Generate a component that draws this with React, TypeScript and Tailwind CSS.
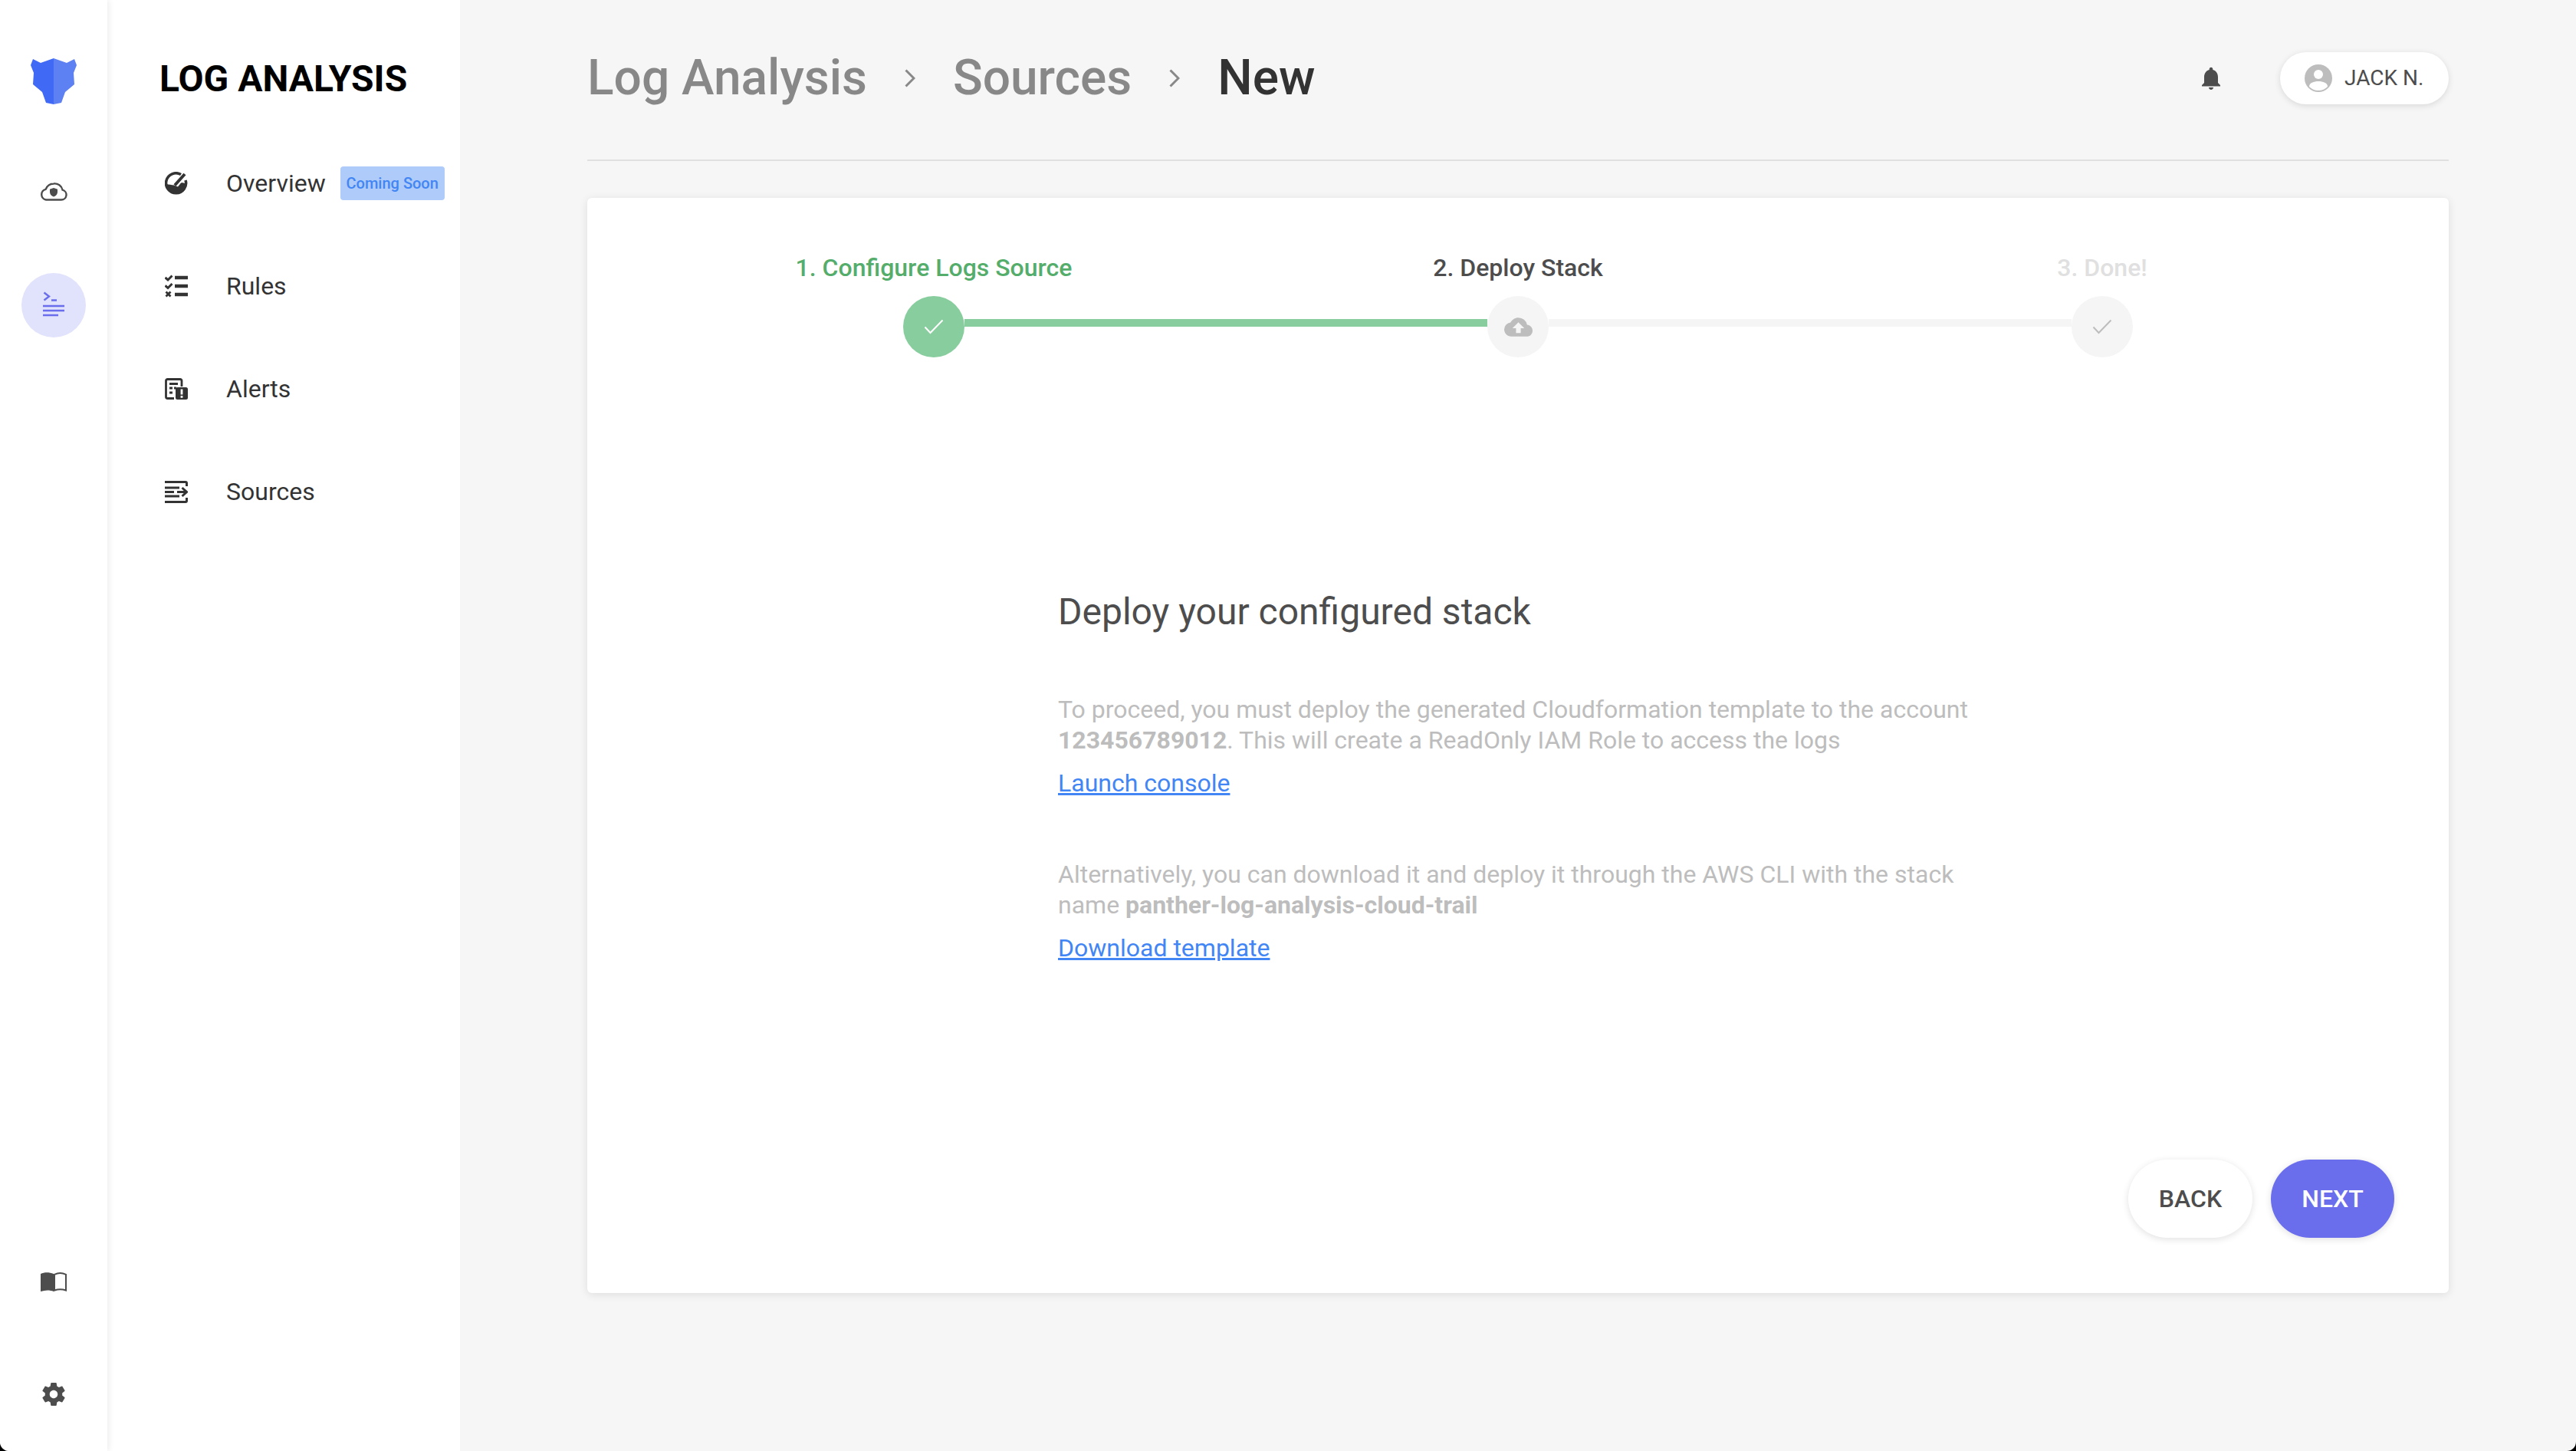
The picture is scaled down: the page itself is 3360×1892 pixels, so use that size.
const Logo = () => (
  <svg viewBox="0 0 60 60" className="h-[60px] w-[60px]">
    <path d="M30 0 L13 6 L3 1 L0 9 L4 19 L3 34 L15 44 L20 58 L30 60 Z" fill="#4069f6" />
    <path d="M30 0 L47 6 L57 1 L60 9 L56 19 L57 34 L45 44 L40 58 L30 60 Z" fill="#5d80f2" />
  </svg>
);

const CloudShield = () => (
  <svg viewBox="0 0 36 24" className="h-[24px] w-[36px]" fill="none">
    <path d="M8 22.500h20a6.500 6.500 0 0 0 1.600-12.800A10.500 10.500 0 0 0 18 1.500 11 11 0 0 0 7.600 8.800 7 7 0 0 0 8 22.500Z" stroke="#4d4d4d" strokeWidth="2.400" />
    <path d="M18 7l5 1.800v3.400c0 3-2 5.400-5 6.300-3-.900-5-3.300-5-6.300V8.800z" fill="#4d4d4d" />
  </svg>
);

const TerminalLines = () => (
  <svg viewBox="0 0 28 36" className="h-[36px] w-[28px]" fill="none" stroke="#6a6eed">
    <path d="M1.500 1.500 L8 6.500 L1.500 11.500" strokeWidth="2.400" />
    <path d="M11 11.500h7M0 19h28M0 25h28M0 31h20" strokeWidth="2.400" />
  </svg>
);

const BookIcon = () => (
  <svg viewBox="0 0 34 26" className="h-[26px] w-[34px]">
    <path d="M0 3c5-2.500 11-2.500 17 0v23c-5-2-11-2-17 0z" fill="#4d4d4d" />
    <path d="M18 3.800c5-2.500 10-2.500 15 0v20.700c-5-1.700-10-1.700-15 0z" fill="none" stroke="#4d4d4d" strokeWidth="2" />
  </svg>
);

const GearIcon = () => (
  <svg viewBox="0 0 24 24" className="h-[36px] w-[36px]" fill="#4d4d4d">
    <path d="M19.430 12.980c.040-.320.070-.640.070-.980s-.030-.660-.070-.980l2.110-1.650c.190-.150.240-.420.120-.640l-2-3.460c-.120-.220-.390-.300-.610-.220l-2.490 1c-.520-.400-1.080-.730-1.690-.980l-.380-2.650A.488.488 0 0 0 14 2h-4c-.250 0-.460.180-.490.420l-.380 2.650c-.610.250-1.170.590-1.690.980l-2.490-1c-.230-.090-.490 0-.610.220l-2 3.460c-.130.220-.070.490.120.640l2.110 1.650c-.040.320-.070.650-.070.980s.030.660.070.980l-2.110 1.650c-.190.150-.240.420-.120.640l2 3.460c.120.220.390.300.610.220l2.490-1c.520.400 1.080.730 1.690.980l.380 2.650c.030.240.240.420.490.420h4c.250 0 .460-.180.490-.420l.380-2.650c.610-.250 1.170-.590 1.690-.980l2.490 1c.230.090.490 0 .610-.220l2-3.460c.120-.220.070-.490-.120-.640l-2.110-1.650zM12 15.500c-1.930 0-3.500-1.570-3.500-3.500s1.570-3.500 3.500-3.500 3.500 1.570 3.500 3.500-1.570 3.500-3.500 3.500z" />
  </svg>
);

const OverviewIcon = () => (
  <svg viewBox="0 0 30 30" className="h-[30px] w-[30px]" fill="none">
    <path d="M21 3.500A13 13 0 1 0 27 11" stroke="#333" strokeWidth="3.600" />
    <path d="M2 16a13 13 0 0 0 26 0c-3-1.500-5-2-7-1.500l-4 5-5-2c-3-.500-7-1-10-1.500z" fill="#333" />
    <path d="M13 17.500 L26 3" stroke="#333" strokeWidth="4" />
  </svg>
);

const RulesIcon = () => (
  <svg viewBox="0 0 30 30" className="h-[30px] w-[30px]" fill="none" stroke="#333">
    <path d="M0.500 4l3.500 3 5.500-5.500M0.500 14.500l3.500 3 5.500-5.500" strokeWidth="3" />
    <path d="M1.500 22.500l6 6M7.500 22.500l-6 6" strokeWidth="2.800" />
    <path d="M13 4h17M13 15h17M13 26h17" strokeWidth="4.400" />
  </svg>
);

const AlertsIcon = () => (
  <svg viewBox="0 0 30 28" className="h-[28px] w-[30px]" fill="none">
    <path d="M22 11V3.500a2 2 0 0 0-2-2H3.500a2 2 0 0 0-2 2v21a2 2 0 0 0 2 2H12" stroke="#333" strokeWidth="2.800" />
    <path d="M6 7.500h11M6 13h4M6 19h4M12 13h3" stroke="#333" strokeWidth="2.800" />
    <rect x="14" y="12" width="16" height="16" rx="2.500" fill="#333" />
    <path d="M22 14.500v7M22 23v2.800" stroke="#fff" strokeWidth="2.800" />
  </svg>
);

const SourcesIcon = () => (
  <svg viewBox="0 0 30 29" className="h-[29px] w-[30px]" fill="none" stroke="#333">
    <path d="M28.500 7V3a1.500 1.500 0 0 0-1.500-1.500H0M28.500 22v4a1.500 1.500 0 0 1-1.500 1.500H0" strokeWidth="3" />
    <path d="M0 9h19M0 14.500h12M0 20h19" strokeWidth="3" />
    <path d="M16 14.500h12M22.500 9l6 5.500-6 5.500" strokeWidth="3" />
  </svg>
);

const BellIcon = () => (
  <svg viewBox="0 0 24 24" className="h-[36px] w-[36px]" fill="#4d4d4d">
    <path d="M12 22c1.100 0 2-.900 2-2h-4c0 1.100.900 2 2 2zm6-6v-5c0-3.070-1.630-5.640-4.500-6.320V4c0-.830-.670-1.500-1.500-1.500s-1.500.670-1.500 1.500v.680C7.640 5.360 6 7.920 6 11v5l-2 2v1h16v-1l-2-2z" />
  </svg>
);

const AvatarIcon = () => (
  <svg viewBox="0 0 36 36" className="h-[36px] w-[36px]">
    <circle cx="18" cy="18" r="18" fill="#bdbdbd" />
    <circle cx="18" cy="13" r="6" fill="#fff" />
    <path d="M6 29c0-5 6-7 12-7s12 2 12 7c-3 3-7 5-12 5s-9-2-12-5z" fill="#fff" />
  </svg>
);

const Chevron = () => (
  <svg viewBox="0 0 14 24" className="mx-[49px] h-[24px] w-[14px]" fill="none">
    <path d="M1.500 1.500L12 12 1.500 22.500" stroke="#888" strokeWidth="3" />
  </svg>
);

const CheckMark = ({ color }: { color: string }) => (
  <svg viewBox="0 0 26 20" className="h-[20px] w-[26px]" fill="none">
    <path d="M1.500 10.500L8.500 18 24.500 1.500" stroke={color} strokeWidth="2" />
  </svg>
);

const CloudUpload = () => (
  <svg viewBox="0 0 24 24" className="h-[37px] w-[37px]" fill="#bdbdbd">
    <path d="M19.350 10.040A7.490 7.490 0 0 0 12 4C9.110 4 6.600 5.640 5.350 8.040A5.994 5.994 0 0 0 0 14c0 3.310 2.690 6 6 6h13c2.760 0 5-2.240 5-5 0-2.640-2.050-4.780-4.650-4.960zM14 13v4h-4v-4H7l5-5 5 5h-3z" />
  </svg>
);

const navItems = [
  { label: 'Overview', icon: <OverviewIcon />, badge: true },
  { label: 'Rules', icon: <RulesIcon /> },
  { label: 'Alerts', icon: <AlertsIcon /> },
  { label: 'Sources', icon: <SourcesIcon /> },
];

export default function App() {
  return (
    <div className="h-[1892px] w-[3360px] overflow-hidden bg-black">
      <div className="flex h-full w-full overflow-hidden rounded-b-[12px] bg-[#f6f6f6] font-['Roboto',sans-serif]">
        {/* Icon rail */}
        <aside className="z-10 flex w-[140px] shrink-0 flex-col items-center bg-white shadow-[2px_0_8px_rgba(0,0,0,0.08)]">
          <div className="mt-[76px] flex"><Logo /></div>
          <div className="mt-[102px] flex"><CloudShield /></div>
          <div className="mt-[94px] flex h-[84px] w-[84px] items-center justify-center rounded-full bg-[#e1e2fb]">
            <TerminalLines />
          </div>
          <div className="mt-auto flex"><BookIcon /></div>
          <div className="mt-[116px] mb-[56px] flex"><GearIcon /></div>
        </aside>

        {/* Section nav */}
        <nav className="flex w-[460px] shrink-0 flex-col bg-white pl-[68px]">
          <h1 className="mt-[73px] text-[48px] leading-[60px] font-bold text-black">LOG ANALYSIS</h1>
          <ul className="mt-[81px] flex flex-col gap-[84px]">
            {navItems.map((item) => (
              <li key={item.label} className="flex h-[50px] items-center text-[32px] text-[#333]">
                <span className="ml-[7px] flex w-[30px] shrink-0 justify-center">{item.icon}</span>
                <span className="ml-[50px]">{item.label}</span>
                {item.badge && (
                  <span className="ml-[19px] flex h-[44px] w-[136px] shrink-0 items-center justify-center rounded-[4px] bg-[#aecbfa] text-[20px] font-medium text-[#4285f4]">Coming Soon</span>
                )}
              </li>
            ))}
          </ul>
        </nav>

        {/* Main */}
        <main className="flex min-w-0 flex-1 flex-col px-[166px]">
          <header className="flex h-[210px] items-start justify-between border-b-2 border-[#e0e0e0] pt-[68px]">
            <div className="flex h-[68px] items-center text-[64px] font-medium text-[#888]">
              <span>Log Analysis</span>
              <Chevron />
              <span>Sources</span>
              <Chevron />
              <span className="text-[#333]">New</span>
            </div>
            <div className="flex items-center">
              <BellIcon />
              <div className="ml-[72px] flex h-[68px] w-[220px] items-center rounded-full bg-white pl-[32px] text-[28px] text-[#4d4d4d] shadow-[0_2px_8px_rgba(0,0,0,0.12)]">
                <AvatarIcon />
                <span className="ml-[16px]">JACK N.</span>
              </div>
            </div>
          </header>

          <section className="mt-[48px] flex h-[1428px] flex-col rounded-[6px] bg-white px-[71px] shadow-[0_2px_12px_rgba(0,0,0,0.1)]">
            {/* Stepper */}
            <div className="mt-[67px] grid grid-cols-3 text-center text-[32px] leading-[48px] font-medium">
              <span className="text-[#55ad6b]">1. Configure Logs Source</span>
              <span className="text-[#4d4d4d]">2. Deploy Stack</span>
              <span className="text-[#e0e0e0]">3. Done!</span>
            </div>
            <div className="mt-[13px] flex items-start px-[341px]">
              <div className="flex h-[80px] w-[80px] shrink-0 items-center justify-center rounded-full bg-[#88cd9e]"><CheckMark color="#fff" /></div>
              <div className="mt-[30px] h-[10px] flex-1 bg-[#88cd9e]" />
              <div className="flex h-[80px] w-[80px] shrink-0 items-center justify-center rounded-full bg-[#f5f5f5]"><CloudUpload /></div>
              <div className="mt-[30px] h-[10px] flex-1 bg-[#f5f5f5]" />
              <div className="flex h-[80px] w-[80px] shrink-0 items-center justify-center rounded-full bg-[#f5f5f5]"><CheckMark color="#bdbdbd" /></div>
            </div>

            {/* Body */}
            <div className="mx-auto mt-[303px] w-[1200px]">
              <h2 className="text-[48px] leading-[58px] text-[#4d4d4d]">Deploy your configured stack</h2>
              <p className="mt-[78px] text-[32px] leading-[40px] text-[#bdbdbd]">
                To proceed, you must deploy the generated Cloudformation template to the account <b className="font-bold">123456789012</b>. This will create a ReadOnly IAM Role to access the logs
              </p>
              <a className="mt-[16px] block text-[32px] leading-[40px] text-[#4285f4] underline">Launch console</a>
              <p className="mt-[79px] text-[32px] leading-[40px] text-[#bdbdbd]">
                Alternatively, you can download it and deploy it through the AWS CLI with the stack name <b className="font-bold">panther-log-analysis-cloud-trail</b>
              </p>
              <a className="mt-[16px] block text-[32px] leading-[40px] text-[#4285f4] underline">Download template</a>
            </div>

            {/* Actions */}
            <div className="mt-auto mb-[72px] flex justify-end gap-[24px]">
              <button className="h-[102px] w-[162px] rounded-full bg-white text-[32px] font-medium text-[#4d4d4d] shadow-[0_2px_10px_rgba(0,0,0,0.12)]">BACK</button>
              <button className="h-[102px] w-[161px] rounded-full bg-[#6a6eed] text-[32px] font-medium text-white shadow-[0_2px_10px_rgba(0,0,0,0.12)]">NEXT</button>
            </div>
          </section>
        </main>
      </div>
    </div>
  );
}
